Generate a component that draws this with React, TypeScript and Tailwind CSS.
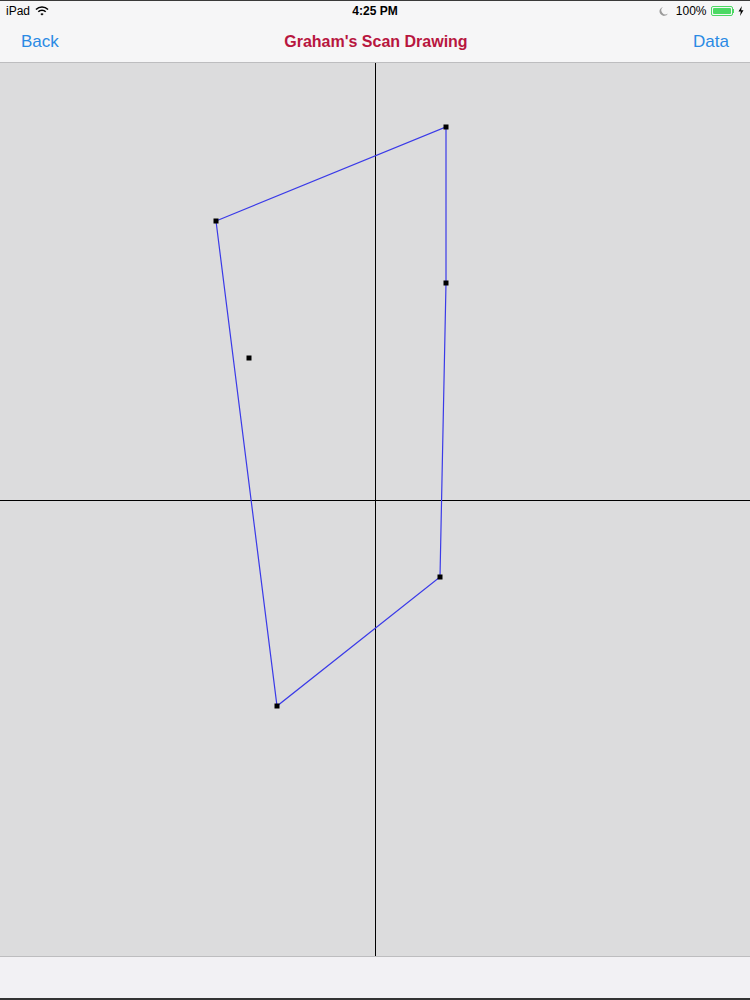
import React from 'react';

// canvas-space coordinates (canvas starts at y=63)
const POINTS: [number, number][] = [
  [446, 64],
  [216, 158],
  [446, 220],
  [249, 295],
  [440, 514],
  [277, 643],
];

const HULL: [number, number][] = [
  [216, 158],
  [446, 64],
  [446, 220],
  [440, 514],
  [277, 643],
];

function StatusBar() {
  return (
    <div className="h-[21px] shrink-0 flex items-center justify-between px-[6px] bg-[#f6f6f7] text-[12px] text-black border-t border-[#3a3a3a]">
      <div className="flex items-center gap-[5px]">
        <span>iPad</span>
        <svg width="14" height="10" viewBox="0 0 14 10">
          <path d="M1 3.5 A8.5 8.5 0 0 1 13 3.5" stroke="#000" strokeWidth="1.6" fill="none" />
          <path d="M3.3 5.8 A5.2 5.2 0 0 1 10.7 5.8" stroke="#000" strokeWidth="1.6" fill="none" />
          <path d="M7 9.6 L5.4 7.9 A2.3 2.3 0 0 1 8.6 7.9 Z" fill="#000" />
        </svg>
      </div>
      <span className="font-semibold absolute left-1/2 -translate-x-1/2">4:25 PM</span>
      <div className="flex items-center gap-[4px]">
        <svg width="10" height="10" viewBox="0 0 10 10">
          <path d="M4 1 A4.5 4.5 0 1 0 9 7.5 A3.8 3.8 0 0 1 4 1 Z" fill="#9a9a9a" />
        </svg>
        <span className="ml-[3px]">100%</span>
        <div className="flex items-center">
          <div className="w-[22px] h-[10px] rounded-[2px] border border-[#4cd964] p-[1px]">
            <div className="w-full h-full bg-[#4cd964] rounded-[1px]" />
          </div>
          <div className="w-[1.5px] h-[4px] bg-[#4cd964]" />
        </div>
        <svg width="6" height="10" viewBox="0 0 6 10">
          <path d="M3.8 0 L0.5 5.6 H2.8 L2 10 L5.5 4.2 H3.2 Z" fill="#000" />
        </svg>
      </div>
    </div>
  );
}

export default function App() {
  return (
    <div className="relative w-[750px] h-[1000px] flex flex-col bg-[#dcdcdd] font-['Liberation_Sans',Arial,sans-serif]">
      <StatusBar />
      <div className="h-[42px] shrink-0 flex items-center justify-between px-[21px] pt-[1px] bg-[#f6f6f7] border-b border-[#bdbdbf]">
        <span className="text-[17px] text-[#2a8ae4]">Back</span>
        <span className="text-[16px] font-bold text-[#b8163f]">Graham's Scan Drawing</span>
        <span className="text-[17px] text-[#2a8ae4]">Data</span>
      </div>
      <div className="flex-1 bg-[#dcdcdd]">
        <svg width="750" height="893" viewBox="0 0 750 893" className="block">
          <line x1="0" y1="437.5" x2="750" y2="437.5" stroke="#000" strokeWidth="1" />
          <line x1="375.5" y1="0" x2="375.5" y2="893" stroke="#000" strokeWidth="1" />
          <polygon
            points={HULL.map(p => p.join(',')).join(' ')}
            fill="none"
            stroke="#3a3ae8"
            strokeWidth="1.2"
          />
          {POINTS.map(([x, y]) => (
            <rect key={`${x}-${y}`} x={x - 2.5} y={y - 2.5} width="5" height="5" fill="#000" />
          ))}
        </svg>
      </div>
      <div className="h-[44px] shrink-0 bg-[#f2f1f4] border-t border-[#bdbdbf] border-b-2 border-b-[#333]" />
    </div>
  );
}
